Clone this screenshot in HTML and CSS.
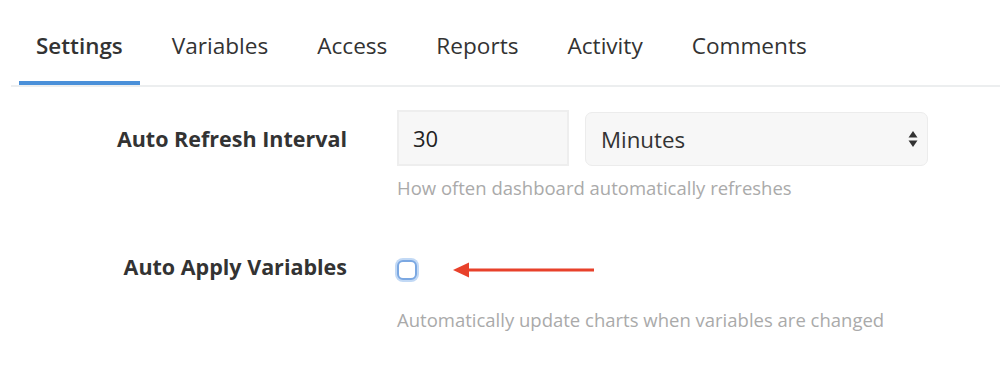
FILE: index.html
```html
<!DOCTYPE html>
<html lang="en">
  <head>
    <meta charset="UTF-8" />
    <title>Dashboard Settings</title>
    <link rel="stylesheet" href="styles.css">
  </head>
  <body>
    <nav class="tabs">
      <a class="tab active">Settings</a>
      <a class="tab">Variables</a>
      <a class="tab">Access</a>
      <a class="tab">Reports</a>
      <a class="tab">Activity</a>
      <a class="tab">Comments</a>
    </nav>

    <form class="settings-form">
      <div class="row">
        <label class="row-label" for="interval">Auto Refresh Interval</label>
        <div class="row-body">
          <div class="fields">
            <input type="text" id="interval" class="num-input" value="30" />
            <div class="select-box">
              <span>Minutes</span>
              <svg class="select-arrows" width="10" height="20" viewBox="0 0 10 20">
                <polygon points="5,2 9.5,8.5 0.5,8.5" fill="#333" />
                <polygon points="0.5,11.5 9.5,11.5 5,18" fill="#333" />
              </svg>
            </div>
          </div>
          <p class="help">How often dashboard automatically refreshes</p>
        </div>
      </div>

      <div class="row row-check">
        <label class="row-label" for="auto-apply">Auto Apply Variables</label>
        <div class="row-body">
          <div class="check-wrap">
            <span class="checkbox" id="auto-apply"></span>
            <!-- annotation arrow pointing at the checkbox -->
            <svg class="callout" width="142" height="18" viewBox="0 0 142 18">
              <line x1="12" y1="9" x2="141" y2="9" stroke="#e8412b" stroke-width="3" />
              <polygon points="0,9 16,1.5 16,16.5" fill="#e8412b" />
            </svg>
          </div>
          <p class="help help-check">Automatically update charts when variables are changed</p>
        </div>
      </div>
    </form>
  </body>
</html>
```

FILE: styles.css
```css
body {
  font-family: "Open Sans", Arial, sans-serif;
  margin: 0;
  padding: 0;
  background-color: #fff;
  color: #333;
}
.tabs {
  display: flex;
  gap: 15px;
  margin-left: 11px;
  padding: 31px 0 0 8px;
  border-bottom: 2px solid #eceeef;
}
.tab {
  font-size: 22.6px;
  line-height: 30px;
  padding: 0 17px 20px;
  border-bottom: 4px solid transparent;
  color: #333;
  cursor: pointer;
}
.tab.active {
  font-weight: 600;
  font-size: 22.4px;
  border-bottom-color: #4a90d9;
}
.settings-form {
  padding-top: 23px;
}
.row {
  display: grid;
  grid-template-columns: 347px 531px;
  column-gap: 50px;
}
.row-label {
  text-align: right;
  font-size: 21.5px;
  font-weight: 700;
  line-height: 56px;
  padding-top: 1px;
  color: #333;
}
.fields {
  display: flex;
  gap: 16px;
}
.num-input {
  width: 172px;
  height: 56px;
  box-sizing: border-box;
  padding: 0 14px;
  border: 2px solid #eeeeee;
  background-color: #f7f7f7;
  font-family: "Open Sans", Arial, sans-serif;
  font-size: 22px;
  color: #222;
  outline: none;
}
.select-box {
  flex: 1;
  height: 54px;
  margin-top: 2px;
  box-sizing: border-box;
  display: flex;
  align-items: center;
  justify-content: space-between;
  padding: 0 9px 0 15px;
  border: 1px solid #ececec;
  border-radius: 7px;
  background-color: #f7f7f7;
  font-size: 22.3px;
  color: #333;
}
.help {
  margin: 9px 0 0;
  font-size: 18.5px;
  line-height: 26px;
  color: #aaa;
}
.row-check {
  margin-top: 54px;
}
.row-check .row-label {
  line-height: 24px;
  padding-top: 0;
}
.check-wrap {
  position: relative;
  height: 30px;
  display: flex;
  align-items: center;
}
.checkbox {
  display: block;
  width: 16px;
  height: 16px;
  border: 2px solid #7ba8e2;
  border-radius: 6px;
  background-color: #fff;
  box-shadow: 0 0 0 2px #c2d9f5;
}
.callout {
  position: absolute;
  left: 56px;
  top: 6px;
}
.help-check {
  margin-top: 22px;
}
```
